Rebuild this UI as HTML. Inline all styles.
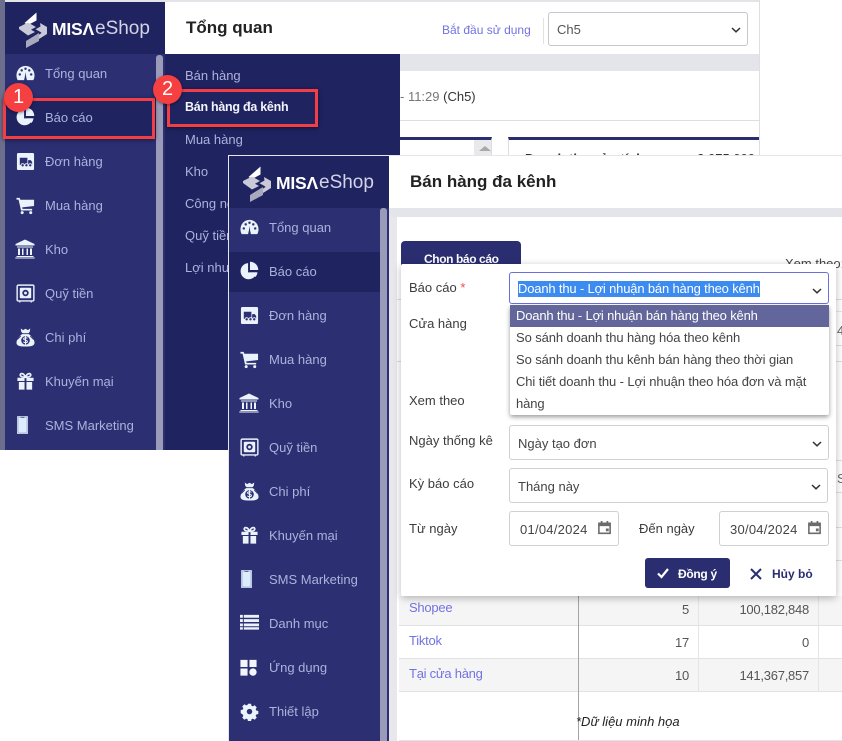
<!DOCTYPE html>
<html><head><meta charset="utf-8">
<style>
html,body{margin:0;padding:0;background:#fff}
#p{position:relative;width:842px;height:741px;overflow:hidden;background:#fff;font-family:"Liberation Sans",sans-serif;font-size:13px;color:#333}
#p div,#p span.a,#p svg.a{position:absolute;box-sizing:border-box}
.t{white-space:nowrap;line-height:18px}
.m{color:#aeb1dc}
.sub{color:#aeb1dc}
.sel{background:#fff;border:1px solid #cfcfd4;border-radius:3px}
.lb{color:#3c3c3c}
.val{color:#444}
.opt{left:0;right:0;height:22px;line-height:22px;padding-left:6px;white-space:nowrap;color:#444;letter-spacing:-.1px}
.lnk{color:#7272e2;letter-spacing:-.25px}
.num{color:#555;text-align:right;letter-spacing:-.25px}
.logo1{font-size:17.5px;line-height:28px;color:#fff;font-weight:bold;letter-spacing:-.2px}
.logo2{font-size:19px;line-height:28px;color:#d4d4e6}
</style></head><body>
<svg width="0" height="0" style="position:absolute">
<symbol id="i-gauge" viewBox="0 0 20 20"><path fill-rule="evenodd" fill="#eaf2fb" d="M10 2C4.500 2 .5 6.500 .5 12c0 2 .5 3.800 1.300 5h16.400c.8-1.200 1.300-3 1.300-5C19.500 6.500 15.500 2 10 2zM4 12.300a1.300 1.300 0 1 1 0-2.600 1.300 1.300 0 0 1 0 2.600zM6 8a1.300 1.300 0 1 1 0-2.600A1.300 1.300 0 0 1 6 8zm4-1.700a1.300 1.300 0 1 1 0-2.600 1.300 1.300 0 0 1 0 2.600zM14 8a1.300 1.300 0 1 1 0-2.600A1.300 1.300 0 0 1 14 8zm2 4.300a1.300 1.300 0 1 1 0-2.600 1.300 1.300 0 0 1 0 2.600zM11.500 17h-3l.8-3.500.7-5 .7 5z"/></symbol>
<symbol id="i-pie" viewBox="0 0 20 20"><path fill="#eaf2fb" d="M8.500 2.200A8.500 8.500 0 1 0 17.500 12H8.500z"/><path fill="#eaf2fb" d="M10.500 .8a8.500 8.500 0 0 1 8.700 8.700h-8.700z"/><path fill="#eaf2fb" d="M11 12h7.500a8.500 8.500 0 0 1-2.300 4.800z"/></symbol>
<symbol id="i-truck" viewBox="0 0 20 20"><rect x="1" y="1" width="18" height="18" rx="1.500" fill="#eaf2fb"/><path fill="#2c3073" d="M4 6h8v7.500H4zM12.800 8.500h2.700l1.500 2v3h-4.200z"/><circle cx="7" cy="14" r="1.700" fill="#2c3073" stroke="#eaf2fb" stroke-width=".8"/><circle cx="11" cy="14" r="1.700" fill="#2c3073" stroke="#eaf2fb" stroke-width=".8"/><circle cx="15" cy="14" r="1.700" fill="#2c3073" stroke="#eaf2fb" stroke-width=".8"/></symbol>
<symbol id="i-cart" viewBox="0 0 20 20"><path fill="#eaf2fb" d="M.5 2h3.300l.8 2H19v6.500L6.500 12l.4 1.500H17v1.800H5.300L2.700 3.800H.5z"/><circle cx="6.500" cy="17.500" r="1.600" fill="#eaf2fb"/><circle cx="15.500" cy="17.500" r="1.600" fill="#eaf2fb"/></symbol>
<symbol id="i-bank" viewBox="0 0 20 20"><path fill="#eaf2fb" d="M10 .5l9.500 4.500v1.500H.5V5zM2 7.500h16v1H2zM3 9.500h2v6.500H3zM7 9.500h1.500v6.500H7zM11.500 9.500H13v6.500h-1.500zM15 9.500h2v6.500h-2zM1.500 17h17v1H1.500zM.3 18.500h19.400v1H.3z"/></symbol>
<symbol id="i-safe" viewBox="0 0 20 20"><path fill="none" stroke="#eaf2fb" stroke-width="1.500" d="M2.500 1.200h15a1.300 1.300 0 0 1 1.300 1.300v14a1.300 1.300 0 0 1-1.300 1.300h-15a1.300 1.300 0 0 1-1.300-1.300v-14a1.300 1.300 0 0 1 1.300-1.300z"/><rect x="4" y="4" width="12" height="11" rx="1" fill="#eaf2fb"/><circle cx="10" cy="9.500" r="3.400" fill="#2c3073"/><circle cx="10" cy="9.500" r="1.500" fill="#eaf2fb"/><path stroke="#eaf2fb" stroke-width="1.300" d="M4 18v1.500M16 18v1.500"/></symbol>
<symbol id="i-money" viewBox="0 0 20 20"><path fill="#eaf2fb" d="M5 .5l2.500 1.700L10 .8l2.500 1.400L15 .5l-.5 3.500-1.500 1.500H7L5.500 4z"/><path fill="#eaf2fb" d="M6.500 6.500h7c3 2 6 6 6 9 0 3-3 4-9.500 4S.5 18.500.5 15.500c0-3 3-7 6-9z"/><circle cx="10" cy="13" r="4.500" fill="#2c3073"/><path fill="none" stroke="#eaf2fb" stroke-width="1.100" d="M12 11c-.5-1-3.800-1.200-4 .4-.2 1.800 4.200 1 4 3-.2 1.500-3.500 1.300-4.200.1M10 8.500v9"/><path stroke="#2c3073" stroke-width=".9" d="M1.500 12L5 8.500M18.500 12L15 8.500"/></symbol>
<symbol id="i-gift" viewBox="0 0 20 20"><path fill="#eaf2fb" d="M1.500 6h7.500v3.500H1.500zM11 6h7.500v3.500H11zM3 10.500h6v8H3zM11 10.500h6v8h-6z"/><path fill="none" stroke="#eaf2fb" stroke-width="1.800" d="M10 5.500C8 .5 4 1 4.500 3.500 5 5.500 8 5.500 10 5.500zM10 5.500c2-5 6-4.500 5.500-2C15 5.500 12 5.500 10 5.500z"/></symbol>
<symbol id="i-phone" viewBox="0 0 20 20"><rect x="4.200" y=".5" width="11.600" height="19" rx="1.500" fill="#eaf2fb"/><rect x="5.200" y="1.500" width="9.600" height="17" rx=".8" fill="#dcecff" stroke="#2c3073" stroke-width=".4"/><path d="M8 1.500h4v.8H8z" fill="#2c3073"/></symbol>
<symbol id="i-list" viewBox="0 0 20 20"><path fill="#eaf2fb" d="M0 3h3v3H0zM4 3h16v3H4zM0 7.500h3v3H0zM4 7.500h16v3H4zM0 12h3v3H0zM4 12h16v3H4zM0 16h3v2.500H0zM4 16h16v2.500H4z" transform="translate(0 -1)"/></symbol>
<symbol id="i-apps" viewBox="0 0 20 20"><path fill="#f2f6fc" d="M1.500 2h7.500v7.500H1.500zM11 2h7.500v7.500H11zM1.500 11h7.500v7.500H1.500z"/><circle cx="14.700" cy="14.800" r="3.900" fill="#f2f6fc"/></symbol>
<symbol id="i-gear" viewBox="0 0 20 20"><path fill-rule="evenodd" fill="#eaf2fb" d="M8.200 1h3.600l.5 2.400 1.600.7 2.100-1.300 2.500 2.500-1.300 2.100.7 1.600 2.400.5v3.600l-2.400.5-.7 1.600 1.300 2.100-2.500 2.500-2.100-1.300-1.600.7-.5 2.400H8.200l-.5-2.400-1.600-.7-2.100 1.300-2.500-2.500 1.300-2.100-.7-1.600L-.3 12V8.400l2.400-.5.700-1.600L1.500 4.200 4 1.700l2.100 1.300 1.600-.7zM10 7a3.200 3.200 0 1 0 0 6.400A3.200 3.200 0 0 0 10 7z" transform="translate(1 .9) scale(.9)"/></symbol>
<symbol id="i-logo" viewBox="0 0 30 36"><path fill="#fff" d="M18.500 .5v8L10 13l-3.500-2z"/><path fill="#c9c9d8" d="M1 15l9-4.500 8 4.500-5 2.700 4 2.300-7 3.500L1 17z"/><path fill="#dcdce6" d="M22 11l7 4v7l-8 5-3.500-2 6-4-1-1-5-2.800 5-2.700z" opacity=".9"/><path fill="#a9a9bd" d="M8 29l13-8v8l-13 7z"/></symbol>
<symbol id="i-cal" viewBox="0 0 16 16"><path fill="none" stroke="#6c6c6c" stroke-width="1.700" d="M2 3.500h12v10.700H2z"/><path fill="#6c6c6c" d="M2 3h12v3.500H2zM4 1h1.800v3H4zM10.200 1H12v3h-1.800zM9.500 9h3v3h-3z"/></symbol>
<symbol id="i-chev" viewBox="0 0 10 6"><path fill="none" stroke="#333" stroke-width="1.500" d="M1 1l4 3.800L9 1"/></symbol>
</svg>
<div id="p">

<!-- WINDOW 1 -->
<div style="left:0;top:0;width:759px;height:2px;background:#e4e4e8"></div>
<div style="left:0;top:0;width:5px;height:450px;background:#6b6e8c"></div>
<div style="left:5px;top:2px;width:160px;height:52px;background:#1f2360"></div>
<svg class="a" style="left:18px;top:12px" width="30" height="36"><use href="#i-logo"/></svg>
<div class="t logo1" style="left:52px;top:15px">MISΛ</div>
<div class="t logo2" style="left:95px;top:15px">eShop</div>
<div style="left:165px;top:2px;width:594px;height:52px;background:#fff"></div>
<div class="t" style="left:186px;top:16px;font-size:17px;line-height:24px;font-weight:bold;color:#222">Tổng quan</div>
<div class="t lnk" style="left:442px;top:21px;font-size:12px;letter-spacing:0">Bắt đầu sử dụng</div>
<div style="left:543px;top:18px;width:1px;height:26px;background:#e2e2e6"></div>
<div class="sel" style="left:548px;top:12px;width:200px;height:34px;border-color:#c6c6cc"></div>
<div class="t val" style="left:557px;top:21px;color:#555">Ch5</div>
<svg class="a" style="left:731px;top:27px" width="10" height="6"><use href="#i-chev"/></svg>
<div style="left:400px;top:54px;width:359px;height:17px;background:#e4e5ea"></div>
<div style="left:400px;top:71px;width:359px;height:84px;background:#fff"></div>
<div class="t" style="left:400px;top:88px;color:#777">- 11:29 <span style="color:#333">(Ch5)</span></div>
<div style="left:400px;top:120px;width:359px;height:1px;background:#dedee2"></div>
<div style="left:400px;top:137px;width:92px;height:18px;background:#fff;border-top:3px solid #2a2e70;border-right:1px solid #ddd"></div>
<div style="left:474px;top:140px;width:17px;height:15px;background:#e9e9ec"></div>
<div style="left:479px;top:146px;width:0;height:0;border:6px solid transparent;border-top:0;border-bottom:5px solid #a8a8a8"></div>
<div style="left:508px;top:137px;width:251px;height:18px;background:#fff;border-top:3px solid #2a2e70;border-left:1px solid #ddd"></div>
<div style="left:525px;top:150px;width:230px;height:5px;overflow:hidden"><div class="t" style="left:0;top:0;font-weight:bold;color:#333">Doanh thu sửa tính</div><div class="t" style="right:0;top:0;color:#333">2,075,000</div></div>
<div style="left:759px;top:0;width:1px;height:155px;background:#dfdfe3"></div>
<div style="left:5px;top:54px;width:151px;height:396px;background:#2c3073"></div>
<div style="left:5px;top:98px;width:151px;height:40px;background:#1f2360"></div>
<div style="left:156px;top:54px;width:9px;height:396px;background:#2c3073"></div>
<div style="left:156px;top:55px;width:7px;height:395px;background:#9a9bb8;border-radius:3px 3px 0 0"></div>
<svg class="a" style="left:16px;top:64px" width="19" height="19"><use href="#i-gauge"/></svg>
<svg class="a" style="left:16px;top:107px" width="19" height="19"><use href="#i-pie"/></svg>
<svg class="a" style="left:16px;top:152px" width="19" height="19"><use href="#i-truck"/></svg>
<svg class="a" style="left:16px;top:196px" width="19" height="19"><use href="#i-cart"/></svg>
<svg class="a" style="left:15px;top:239px" width="20" height="20"><use href="#i-bank"/></svg>
<svg class="a" style="left:16px;top:284px" width="19" height="19"><use href="#i-safe"/></svg>
<svg class="a" style="left:16px;top:328px" width="19" height="19"><use href="#i-money"/></svg>
<svg class="a" style="left:16px;top:372px" width="19" height="19"><use href="#i-gift"/></svg>
<svg class="a" style="left:13px;top:415px" width="19" height="20"><use href="#i-phone"/></svg>
<div class="t m" style="left:45px;top:65px">Tổng quan</div>
<div class="t m" style="left:45px;top:109px">Báo cáo</div>
<div class="t m" style="left:45px;top:153px">Đơn hàng</div>
<div class="t m" style="left:45px;top:197px">Mua hàng</div>
<div class="t m" style="left:45px;top:241px">Kho</div>
<div class="t m" style="left:45px;top:285px">Quỹ tiền</div>
<div class="t m" style="left:45px;top:329px">Chi phí</div>
<div class="t m" style="left:45px;top:373px">Khuyến mại</div>
<div class="t m" style="left:45px;top:417px">SMS Marketing</div>
<div style="left:165px;top:54px;width:235px;height:396px;background:#1f2360"></div>
<div class="t sub" style="left:185px;top:67px">Bán hàng</div>
<div class="t" style="left:185px;top:98px;color:#f4f4fa;font-weight:bold;font-size:12.5px;letter-spacing:-.27px">Bán hàng đa kênh</div>
<div class="t sub" style="left:185px;top:131px">Mua hàng</div>
<div class="t sub" style="left:185px;top:163px">Kho</div>
<div class="t sub" style="left:185px;top:195px">Công nợ</div>
<div class="t sub" style="left:185px;top:227px">Quỹ tiền</div>
<div class="t sub" style="left:185px;top:259px">Lợi nhuận</div>
<!-- annotations -->
<div style="left:3px;top:98px;width:152px;height:41px;border:3px solid #f23e44;box-shadow:0 1px 4px rgba(0,0,0,.5)"></div>
<div style="left:167px;top:89px;width:151px;height:38px;border:3px solid #f23e44;box-shadow:0 1px 4px rgba(0,0,0,.5)"></div>
<div style="left:4px;top:83px;width:29px;height:29px;border-radius:50%;background:#f53f41;color:#fff;font-size:20px;line-height:29px;text-align:center;box-shadow:0 1px 3px rgba(0,0,0,.45)">1</div>
<div style="left:153px;top:75px;width:29px;height:29px;border-radius:50%;background:#f53f41;color:#fff;font-size:20px;line-height:29px;text-align:center;box-shadow:0 1px 3px rgba(0,0,0,.45)">2</div>

<!-- WINDOW 2 -->
<div style="left:228px;top:155px;width:614px;height:586px;background:#fff;border:1px solid #e6e6ea;border-bottom:0;border-right:0"></div>
<div style="left:229px;top:156px;width:160px;height:52px;background:#1f2360"></div>
<svg class="a" style="left:242px;top:166px" width="30" height="36"><use href="#i-logo"/></svg>
<div class="t logo1" style="left:276px;top:169px">MISΛ</div>
<div class="t logo2" style="left:319px;top:169px">eShop</div>
<div class="t" style="left:410px;top:170px;font-size:17px;line-height:24px;font-weight:bold;color:#222">Bán hàng đa kênh</div>
<div style="left:389px;top:208px;width:453px;height:9px;background:#e4e5ea"></div>
<div style="left:389px;top:217px;width:8px;height:524px;background:#e8e8ec"></div>
<div style="left:229px;top:208px;width:160px;height:533px;background:#2c3073"></div>
<div style="left:229px;top:252px;width:151px;height:40px;background:#1f2360"></div>
<div style="left:380px;top:208px;width:7px;height:533px;background:#9a9bb8;border-radius:3px 3px 0 0"></div>
<svg class="a" style="left:240px;top:218px" width="19" height="19"><use href="#i-gauge"/></svg>
<svg class="a" style="left:240px;top:261px" width="19" height="19"><use href="#i-pie"/></svg>
<svg class="a" style="left:240px;top:306px" width="19" height="19"><use href="#i-truck"/></svg>
<svg class="a" style="left:240px;top:350px" width="19" height="19"><use href="#i-cart"/></svg>
<svg class="a" style="left:239px;top:393px" width="20" height="20"><use href="#i-bank"/></svg>
<svg class="a" style="left:240px;top:438px" width="19" height="19"><use href="#i-safe"/></svg>
<svg class="a" style="left:240px;top:482px" width="19" height="19"><use href="#i-money"/></svg>
<svg class="a" style="left:240px;top:526px" width="19" height="19"><use href="#i-gift"/></svg>
<svg class="a" style="left:237px;top:569px" width="19" height="20"><use href="#i-phone"/></svg>
<svg class="a" style="left:240px;top:613px" width="19" height="19"><use href="#i-list"/></svg>
<svg class="a" style="left:239px;top:658px" width="19" height="19"><use href="#i-apps"/></svg>
<svg class="a" style="left:240px;top:702px" width="19" height="19"><use href="#i-gear"/></svg>
<div class="t m" style="left:269px;top:219px">Tổng quan</div>
<div class="t m" style="left:269px;top:263px">Báo cáo</div>
<div class="t m" style="left:269px;top:307px">Đơn hàng</div>
<div class="t m" style="left:269px;top:351px">Mua hàng</div>
<div class="t m" style="left:269px;top:395px">Kho</div>
<div class="t m" style="left:269px;top:439px">Quỹ tiền</div>
<div class="t m" style="left:269px;top:483px">Chi phí</div>
<div class="t m" style="left:269px;top:527px">Khuyến mại</div>
<div class="t m" style="left:269px;top:571px">SMS Marketing</div>
<div class="t m" style="left:269px;top:615px">Danh mục</div>
<div class="t m" style="left:269px;top:659px">Ứng dụng</div>
<div class="t m" style="left:269px;top:703px">Thiết lập</div>

<!-- background of report -->
<div style="left:401px;top:241px;width:120px;height:30px;background:#2a2e70;border-radius:4px 4px 0 0"></div>
<div class="t" style="left:424px;top:250px;font-size:12px;font-weight:bold;color:#fff;letter-spacing:-.4px">Chọn báo cáo</div>
<div class="t" style="left:785px;top:255px;color:#444">Xem theo:</div>
<div style="left:836px;top:299px;width:6px;height:1px;background:#dedee2"></div>
<div style="left:836px;top:311px;width:6px;height:1px;background:#e6e6e8"></div>
<div style="left:836px;top:345px;width:6px;height:1px;background:#e0e0e4"></div>
<div style="left:836px;top:361px;width:6px;height:1px;background:#e0e0e4"></div>
<div style="left:836px;top:460px;width:6px;height:1px;background:#e0e0e4"></div>
<div style="left:836px;top:492px;width:6px;height:1px;background:#e0e0e4"></div>
<div style="left:836px;top:527px;width:6px;height:1px;background:#e0e0e4"></div>
<div style="left:836px;top:560px;width:6px;height:1px;background:#e0e0e4"></div>
<div class="t" style="left:837px;top:322px;color:#666">4</div>
<div class="t" style="left:837px;top:470px;color:#666">S</div>
<div style="left:397px;top:299px;width:4px;height:1px;background:#dedee2"></div>
<div style="left:397px;top:361px;width:4px;height:1px;background:#dedee2"></div>

<!-- table -->
<div style="left:399px;top:596px;width:443px;height:29px;background:#f5f5f5"></div>
<div style="left:399px;top:658px;width:443px;height:33px;background:#f5f5f5"></div>
<div style="left:399px;top:625px;width:443px;height:1px;background:#e2e2e4"></div>
<div style="left:399px;top:658px;width:443px;height:1px;background:#e2e2e4"></div>
<div style="left:399px;top:691px;width:443px;height:1px;background:#e2e2e4"></div>
<div style="left:578px;top:596px;width:1px;height:145px;background:#a4a4a8"></div>
<div style="left:698px;top:596px;width:1px;height:95px;background:#e4e4e6"></div>
<div style="left:818px;top:596px;width:1px;height:95px;background:#e4e4e6"></div>
<div style="left:399px;top:740px;width:443px;height:1px;background:#e4e4e6"></div>
<div class="t lnk" style="left:409px;top:599px">Shopee</div>
<div class="t lnk" style="left:409px;top:632px">Tiktok</div>
<div class="t lnk" style="left:409px;top:665px">Tại cửa hàng</div>
<div class="t num" style="left:600px;top:601px;width:89px">5</div>
<div class="t num" style="left:600px;top:634px;width:89px">17</div>
<div class="t num" style="left:600px;top:667px;width:89px">10</div>
<div class="t num" style="left:700px;top:601px;width:109px">100,182,848</div>
<div class="t num" style="left:700px;top:634px;width:109px">0</div>
<div class="t num" style="left:700px;top:667px;width:109px">141,367,857</div>
<div class="t" style="left:576px;top:713px;font-style:italic;color:#222">*Dữ liệu minh họa</div>

<!-- popup -->
<div style="left:401px;top:264px;width:435px;height:332px;background:#fff;box-shadow:0 2px 8px rgba(0,0,0,.28);border-radius:2px"></div>
<div class="t lb" style="left:409px;top:279px">Báo cáo <span style="color:#f04a4a">*</span></div>
<div class="t lb" style="left:409px;top:315px">Cửa hàng</div>
<div class="t lb" style="left:409px;top:392px">Xem theo</div>
<div class="t lb" style="left:409px;top:432px">Ngày thống kê</div>
<div class="t lb" style="left:409px;top:475px">Kỳ báo cáo</div>
<div class="t lb" style="left:409px;top:520px">Từ ngày</div>
<div class="t lb" style="left:639px;top:520px">Đến ngày</div>

<div class="sel" style="left:509px;top:272px;width:320px;height:32px;border-color:#6a6fdc"></div>
<div class="t" style="left:518px;top:281px;height:16px;line-height:16px;background:#3b8bf0;color:#fff;letter-spacing:-.17px">Doanh thu - Lợi nhuận bán hàng theo kênh</div>
<svg class="a" style="left:812px;top:288px" width="10" height="6"><use href="#i-chev"/></svg>

<div style="left:510px;top:305px;width:319px;height:110px;background:#fff;border-radius:2px;box-shadow:0 2px 5px rgba(0,0,0,.4)">
<div class="opt" style="top:0;background:#62669a;color:#fff;letter-spacing:-.17px">Doanh thu - Lợi nhuận bán hàng theo kênh</div>
<div class="opt" style="top:22px">So sánh doanh thu hàng hóa theo kênh</div>
<div class="opt" style="top:44px">So sánh doanh thu kênh bán hàng theo thời gian</div>
<div class="opt" style="top:66px">Chi tiết doanh thu - Lợi nhuận theo hóa đơn và mặt</div>
<div class="opt" style="top:88px">hàng</div>
</div>

<div class="sel" style="left:509px;top:425px;width:320px;height:35px"></div>
<div class="t val" style="left:518px;top:435px">Ngày tạo đơn</div>
<svg class="a" style="left:812px;top:441px" width="10" height="6"><use href="#i-chev"/></svg>
<div class="sel" style="left:509px;top:468px;width:319px;height:35px"></div>
<div class="t val" style="left:518px;top:478px">Tháng này</div>
<svg class="a" style="left:811px;top:484px" width="10" height="6"><use href="#i-chev"/></svg>
<div class="sel" style="left:509px;top:511px;width:110px;height:35px"></div>
<div class="t val" style="left:520px;top:521px;letter-spacing:.25px">01/04/2024</div>
<svg class="a" style="left:597px;top:520px" width="15" height="15"><use href="#i-cal"/></svg>
<div class="sel" style="left:719px;top:511px;width:110px;height:35px"></div>
<div class="t val" style="left:730px;top:521px;letter-spacing:.25px">30/04/2024</div>
<svg class="a" style="left:807px;top:520px" width="15" height="15"><use href="#i-cal"/></svg>

<div style="left:645px;top:558px;width:85px;height:30px;background:#2a2e70;border-radius:3px"></div>
<svg class="a" style="left:657px;top:567px" width="12" height="12" viewBox="0 0 12 12"><path fill="none" stroke="#fff" stroke-width="2.200" d="M1 6.500l3.500 3.500L11 2"/></svg>
<div class="t" style="left:678px;top:565px;color:#fff;font-weight:bold;font-size:12px;letter-spacing:-.3px">Đồng ý</div>
<svg class="a" style="left:750px;top:568px" width="12" height="12" viewBox="0 0 12 12"><path fill="none" stroke="#2a2e70" stroke-width="2" d="M1 1l10 10M11 1L1 11"/></svg>
<div class="t" style="left:772px;top:565px;color:#2a2e70;font-weight:bold;font-size:12px">Hủy bỏ</div>

</div>
</body></html>
